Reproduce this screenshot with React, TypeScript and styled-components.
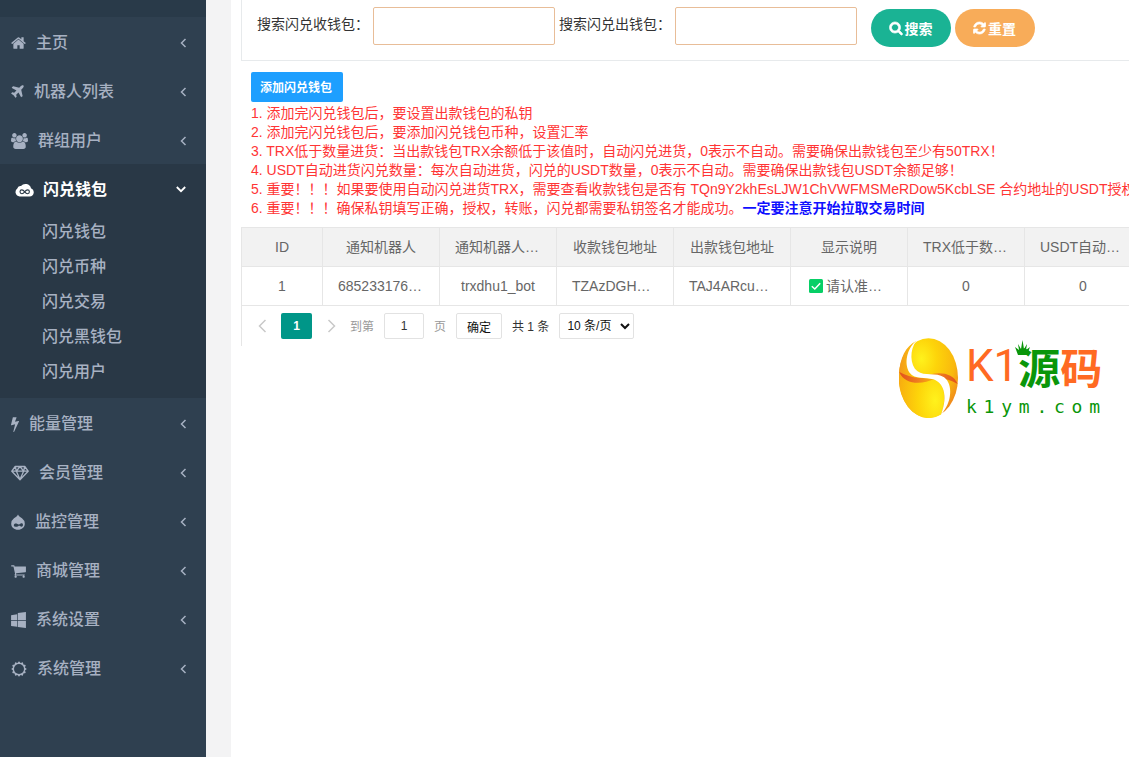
import React from "react";
import styled, { createGlobalStyle } from "styled-components";

const sans = `"Liberation Sans", "Noto Sans CJK SC", sans-serif`;

const GlobalStyle = createGlobalStyle`
  *, *::before, *::after { box-sizing: border-box; }
  body { margin: 0; background: #fff; font-family: ${sans}; font-size: 14px; color: #333; }
  button, input, select { font-family: inherit; }
`;

const Page = styled.div`
  position: relative;
  display: flex;
  min-height: 100vh;
  overflow: hidden;
`;

const Sidebar = styled.nav`
  flex: none;
  width: 206px;
  padding-top: 17px;
  background: #2f4050;
  box-shadow: inset 0 17px 0 #293a49;
`;

const MenuGroup = styled.div<{ $open?: boolean }>`
  padding-bottom: ${(p) => (p.$open ? 10 : 0)}px;
  background: ${(p) => (p.$open ? "#293846" : "transparent")};
`;

const MenuLink = styled.a<{ $open?: boolean }>`
  display: flex;
  align-items: center;
  gap: ${(p) => (p.$open ? 9 : 10)}px;
  height: 49px;
  padding: 2px 19px 0 ${(p) => (p.$open ? 15 : 11)}px;
  font-size: 16px;
  font-weight: ${(p) => (p.$open ? 700 : 500)};
  color: ${(p) => (p.$open ? "#fff" : "#a7b1c2")};
  text-decoration: none;
  white-space: nowrap;
`;

const MenuText = styled.span`
  flex: 1;
  padding-bottom: 4px;
`;

const SubLink = styled.a`
  display: flex;
  align-items: center;
  height: 35px;
  padding: 0 0 2px 42px;
  font-size: 16px;
  font-weight: 500;
  color: #a7b1c2;
  text-decoration: none;
`;

const Gutter = styled.div`
  flex: none;
  width: 25px;
  background: #f3f3f4;
`;

const Content = styled.main`
  flex: 1;
  min-width: 0;
  padding-left: 10px;
`;

const SearchBar = styled.form`
  display: flex;
  align-items: flex-start;
  height: 61px;
  padding: 7px 0 0 15px;
  border-left: 1px solid #e7eaec;
  border-bottom: 1px solid #e7eaec;
`;

const Label = styled.label`
  flex: none;
  width: 116px;
  line-height: 34px;
  white-space: nowrap;
`;

const SearchInput = styled.input`
  flex: none;
  width: 182px;
  height: 38px;
  margin-right: 4px;
  padding: 0 8px;
  border: 1px solid #e8bd98;
  border-radius: 2px;
  background: #fff;
  font-size: 14px;
`;

const PillButton = styled.button<{ $color: string }>`
  display: flex;
  flex: none;
  align-items: center;
  justify-content: center;
  gap: 2px;
  width: 80px;
  height: 38px;
  margin: 2px 4px 0 0;
  padding: 0 1px 1px 0;
  border: 0;
  border-radius: 19px;
  background: ${(p) => p.$color};
  color: #fff;
  font-size: 14px;
  font-weight: 600;
  &:first-of-type { margin-left: 10px; }
`;

const Intro = styled.section`
  padding: 11px 0 0 10px;
`;

const AddButton = styled.button`
  display: block;
  height: 30px;
  padding: 0 11px 2px 9px;
  border: 0;
  border-radius: 2px;
  background: #1e9fff;
  color: #fff;
  font-size: 12px;
  font-weight: 600;
`;

const Notes = styled.div`
  padding: 2px 0 9px;
  color: #ff3535;
  line-height: 19px;
  white-space: nowrap;
`;

const Note = styled.p`
  height: 19px;
  margin: 0;
`;

const Strong = styled.b`
  color: #1010ff;
`;

const TableArea = styled.section`
  height: 119px;
  border-left: 1px solid #e6e6e6;
`;

const Table = styled.table`
  width: 1017px;
  table-layout: fixed;
  border-collapse: separate;
  border-spacing: 0;
  border-top: 1px solid #e6e6e6;
  color: #666;
`;

const Cell = styled.td<{ $narrow?: boolean; $clipped?: boolean }>`
  width: ${(p) => (p.$narrow ? 81 : 117)}px;
  height: 39px;
  padding: 0 ${(p) => (p.$clipped ? 0 : 14)}px 0 ${(p) => (p.$clipped ? 15 : 14)}px;
  border-right: 1px solid #e6e6e6;
  border-bottom: 1px solid #e6e6e6;
  overflow: hidden;
  text-align: ${(p) => (p.$clipped ? "left" : "center")};
  font-weight: 400;
  line-height: 28px;
  white-space: nowrap;
`;

const HeadCell = styled(Cell)`
  background: #f2f2f2;
`;

const CheckedText = styled.span`
  display: flex;
  align-items: center;
  gap: 3px;
  padding-left: 3px;
`;

const Pager = styled.div`
  display: flex;
  align-items: center;
  gap: 10px;
  height: 40px;
  padding-left: 11px;
  font-size: 12px;
  white-space: nowrap;
`;

const PagerArrow = styled.button`
  display: flex;
  align-items: center;
  justify-content: center;
  width: 18px;
  height: 26px;
  padding: 0;
  border: 0;
  background: none;
  color: #c9c9c9;
`;

const CurrentPage = styled.button`
  width: 31px;
  height: 26px;
  padding: 0;
  border: 0;
  border-radius: 2px;
  background: #009688;
  color: #fff;
  font-size: 12px;
  font-weight: 700;
`;

const PagerText = styled.span`
  padding-bottom: 2px;
`;

const Muted = styled.label`
  padding-bottom: 2px;
  color: #999;
`;

const PageInput = styled.input`
  width: 40px;
  height: 26px;
  padding: 0;
  border: 1px solid #e2e2e2;
  border-radius: 2px;
  color: #333;
  text-align: center;
  font-size: 12px;
`;

const ConfirmButton = styled.button`
  width: 46px;
  height: 26px;
  padding: 0;
  border: 1px solid #e2e2e2;
  border-radius: 2px;
  background: #fff;
  color: #111;
  font-size: 12px;
`;

const PageSize = styled.select`
  width: 75px;
  height: 26px;
  padding: 0 0 0 3px;
  border: 1px solid #e2e2e2;
  border-radius: 2px;
  background: #fff;
  color: #111;
  font-size: 12px;
`;

const Watermark = styled.div`
  position: absolute;
  top: 337px;
  right: 29px;
  display: flex;
  align-items: center;
  gap: 8px;
  pointer-events: none;
`;

const Brand = styled.div`
  width: 134px;
`;

const BrandName = styled.div`
  display: flex;
  align-items: center;
  justify-content: space-between;
  height: 58px;
  line-height: 58px;
  color: #ff6a22;
  white-space: nowrap;
`;

const Latin = styled.span`
  font-family: "Liberation Sans Narrow", "Roboto", sans-serif;
  font-size: 44px;
  font-weight: 400;
`;

const Han = styled.span`
  position: relative;
  font-family: "Noto Sans CJK SC", sans-serif;
  font-size: 42px;
  font-weight: 700;
`;

const Green = styled.span`
  color: #0a960a;
`;

const Crown = styled.svg`
  position: absolute;
  top: 3px;
  left: -3px;
`;

const BrandSite = styled.div`
  display: flex;
  justify-content: space-between;
  height: 24px;
  line-height: 24px;
  font-family: "DejaVu Sans Mono", monospace;
  font-size: 18px;
  color: #0a960a;
`;

type GlyphProps = { d: string; x?: number; units: number; width: number; height?: number; bold?: boolean };

const Glyph = ({ d, x = 0, units, width, height = 16, bold }: GlyphProps) => (
  <svg
    width={width}
    height={height}
    viewBox={`${x} 0 ${units} 1792`}
    fill="currentColor"
    stroke="currentColor"
    strokeWidth={bold ? 90 : 0}
    overflow="visible"
    aria-hidden="true"
  >
    <path d={d} />
  </svg>
);

const HOME =
  "M1472 992v480q0 26-19 45t-45 19h-384v-384h-256v384h-384q-26 0-45-19t-19-45v-480q0-1 .5-3t.5-3l575-474 575 474q1 2 1 6zm223-69l-62 74q-8 9-21 11h-3q-13 0-21-7l-692-577-692 577q-12 8-24 7-13-2-21-11l-62-74q-8-10-7-23.5t11-21.5l719-599q32-26 76-26t76 26l244 204v-195q0-14 9-23t23-9h192q14 0 23 9t9 23v408l219 182q10 8 11 21.5t-7 23.5z";
const PLANE =
  "M1568 160q44 52 12 148t-108 172l-161 161 160 696q5 19-12 33l-128 96q-7 6-19 6-4 0-7-1-15-3-21-16l-279-508-259 259 53 194q5 17-8 31l-96 96q-9 9-23 9h-2q-15-2-24-13l-189-252-252-189q-11-7-13-23-1-13 9-25l96-97q9-9 23-9 6 0 8 1l194 53 259-259-508-279q-14-8-17-24-2-16 9-27l128-128q14-13 30-8l665 159 160-160q76-76 172-108t148 12z";
const USERS =
  "M593 896q-162 5-265 128h-134q-82 0-138-40.5t-56-118.5q0-353 124-353 6 0 43.5 21t97.5 42.5 119 21.5q67 0 133-23-5 37-5 66 0 139 81 256zm1071 637q0 120-73 189.5t-194 69.5h-874q-121 0-194-69.5t-73-189.5q0-53 3.5-103.5t14-109 26.5-108.5 43-97.5 62-81 85.5-53.5 111.5-20q10 0 43 21.5t73 48 107 48 135 21.5 135-21.5 107-48 73-48 43-21.5q61 0 111.5 20t85.5 53.5 62 81 43 97.5 26.5 108.5 14 109 3.5 103.5zm-1024-1277q0 106-75 181t-181 75-181-75-75-181 75-181 181-75 181 75 75 181zm704 384q0 159-112.5 271.5t-271.5 112.5-271.5-112.5-112.5-271.5 112.5-271.5 271.5-112.5 271.5 112.5 112.5 271.5zm576 225q0 78-56 118.5t-138 40.5h-134q-103-123-265-128 81-117 81-256 0-29-5-66 66 23 133 23 59 0 119-21.5t97.5-42.5 43.5-21q124 0 124 353zm-128-609q0 106-75 181t-181 75-181-75-75-181 75-181 181-75 181 75 75 181z";
const BOLT =
  "M1333 566q18 20 7 44l-540 1157q-13 25-42 25-4 0-14-2-17-5-25.5-19t-4.5-30l197-808-406 101q-4 1-12 1-18 0-31-11-18-15-13-39l201-825q4-14 16-23t28-9h328q19 0 32 12.5t13 29.5q0 8-5 18l-171 463 396-98q8-2 12-2 19 0 34 15z";
const CART =
  "M704 1536q0 52-38 90t-90 38-90-38-38-90 38-90 90-38 90 38 38 90zm896 0q0 52-38 90t-90 38-90-38-38-90 38-90 90-38 90 38 38 90zm128-1088v512q0 24-16.5 42.5t-40.5 21.5l-1044 122q13 60 13 70 0 16-24 64h920q26 0 45 19t19 45-19 45-45 19h-1024q-26 0-45-19t-19-45q0-11 8-31.5t16-36 21.5-40 15.5-29.5l-177-823h-204q-26 0-45-19t-19-45 19-45 45-19h256q16 0 28.5 6.5t19.5 15.5 13 24.5 8 26 5.5 29.5 4.5 26h1201q26 0 45 19t19 45z";
const WINDOWS =
  "M746 1006v651l-682-94v-557h682zm0-743v659h-682v-565zm982 743v786l-907-125v-661h907zm0-1006v922h-907v-797z";
const SEARCH =
  "M1216 832q0-185-131.5-316.5t-316.5-131.5-316.5 131.5-131.5 316.5 131.5 316.5 316.5 131.5 316.5-131.5 131.5-316.5zm512 832q0 52-38 90t-90 38q-54 0-90-38l-343-342q-179 124-399 124-143 0-273.5-55.5t-225-150-150-225-55.5-273.5 55.5-273.5 150-225 225-150 273.5-55.5 273.5 55.5 225 150 150 225 55.5 273.5q0 220-124 399l343 343q37 37 37 90z";
const REFRESH =
  "M1639 1056q0 5-1 7-64 268-268 434.5t-478 166.5q-146 0-282.5-55t-243.5-157l-129 129q-19 19-45 19t-45-19-19-45v-448q0-26 19-45t45-19h448q26 0 45 19t19 45-19 45l-137 137q71 66 161 102t187 36q134 0 250-65t186-179q11-17 53-117 8-23 30-23h192q13 0 22.5 9.5t9.5 22.5zm25-800v448q0 26-19 45t-45 19h-448q-26 0-45-19t-19-45 19-45l138-138q-148-137-349-137-134 0-250 65t-186 179q-11 17-53 117-8 23-30 23h-199q-13 0-22.5-9.5t-9.5-22.5v-7q65-268 270-434.5t480-166.5q146 0 284 55.5t245 156.5l130-129q19-19 45-19t45 19 19 45z";

const DiamondIcon = () => (
  <svg width="18" height="16" viewBox="0 0 18 16" fill="none" stroke="currentColor" strokeWidth="1.3" strokeLinejoin="round" aria-hidden="true">
    <path d="M4.2 1.5h9.6l3.4 4.7L9 14.8.8 6.2zM.8 6.2h16.4M5.4 6.2L9 14.5l3.6-8.3M4.2 1.5l1.2 4.7L9 1.5l3.6 4.7 1.2-4.7" />
  </svg>
);

const DropIcon = () => (
  <svg width="14" height="16" viewBox="0 0 14 16" aria-hidden="true">
    <path d="M7 .5c.8 2 2.600 2.600 4 3.700a6.900 6.900 0 0 1 2.800 5.500c0 3.500-3 6-6.800 6S.2 13.200.2 9.700A6.900 6.900 0 0 1 3 4.200C4.500 3.100 6.200 2.500 7 .5z" fill="currentColor" />
    <path d="M4.600 12.800c-1.500 0-2-1-1.700-2 .4-1.200 1.900-1.600 3.100-1 1 .5 1.500 1 2.200.7.900-.5 1.600-1.300 2.600-1.200 1.200.2 1.500 1.700.9 2.800-.7 1-1.700.7-2.400.2-.8-.5-1.300-.6-2.100-.1-.8.400-1.500.6-2.600.6z" fill="#2f4050" />
  </svg>
);

const CloudIcon = () => (
  <svg width="19" height="14" viewBox="0 0 19 14" aria-hidden="true">
    <path d="M4.6 13.5A4.4 4.4 0 0 1 2.3 5.6 3.2 3.2 0 0 1 6 3.1 5.7 5.7 0 0 1 16 5.2a4.3 4.3 0 0 1-1.4 8.3z" fill="#fff" />
    <path d="M9.7 8.8C8.6 7.4 7.8 6.9 6.9 6.9a1.9 1.9 0 0 0 0 3.8c.9 0 1.7-.5 2.8-1.900s1.9-1.900 2.8-1.900a1.9 1.9 0 0 1 0 3.8c-.9 0-1.700-.5-2.800-1.900z" fill="none" stroke="#293846" strokeWidth="1.1" />
  </svg>
);

const teeth = Array.from({ length: 24 }, (_, i) => {
  const r = i % 2 ? 6.2 : 7.8;
  const a = (i * Math.PI) / 12;
  return `${(8 + r * Math.sin(a)).toFixed(2)},${(8 - r * Math.cos(a)).toFixed(2)}`;
}).join(" ");

const SunIcon = () => (
  <svg width="16" height="16" viewBox="0 0 16 16" aria-hidden="true">
    <polygon points={teeth} fill="currentColor" />
    <circle cx="8" cy="8" r="5" fill="#2f4050" />
  </svg>
);

const AngleLeft = () => (
  <svg width="7" height="10" viewBox="0 0 7 10" fill="none" stroke="currentColor" strokeWidth="1.5" aria-hidden="true">
    <path d="M5.5 1L1.5 5l4 4" />
  </svg>
);

const AngleDown = () => (
  <svg width="11" height="7" viewBox="0 0 11 7" fill="none" stroke="currentColor" strokeWidth="1.8" aria-hidden="true">
    <path d="M.8 1L5 5.2 9.2 1" />
  </svg>
);

const PageChevron = ({ next }: { next?: boolean }) => (
  <svg width="9" height="14" viewBox="0 0 9 14" fill="none" stroke="currentColor" strokeWidth="1.5" aria-hidden="true">
    <path d={next ? "M1.5 1l6 6-6 6" : "M7.5 1l-6 6 6 6"} />
  </svg>
);

const CheckMark = () => (
  <svg width="14" height="14" viewBox="0 0 14 14" role="img" aria-label="✅">
    <rect width="14" height="14" rx="1.5" fill="#07cf66" />
    <path d="M2.8 7.2l3 2.8 5.4-5.8" fill="none" stroke="#fff" strokeWidth="1.5" />
  </svg>
);

const SwirlBand = () => <path d="M1 102C20 113 40 118 60 119L106 123C70 141 16 141 1 102z" fill="url(#band)" />;

const Swirl = () => (
  <svg width="59" height="80" viewBox="0 0 178 240" aria-hidden="true">
    <defs>
      <radialGradient id="upper" cx="0.38" cy="0.26" r="0.75">
        <stop offset="0" stopColor="#fff21c" />
        <stop offset="0.35" stopColor="#fdd40a" />
        <stop offset="0.75" stopColor="#f9b80e" />
        <stop offset="1" stopColor="#f08a1c" />
      </radialGradient>
      <radialGradient id="lower" cx="0.8" cy="0.77" r="0.95">
        <stop offset="0" stopColor="#fff21c" />
        <stop offset="0.4" stopColor="#fdd40a" />
        <stop offset="0.8" stopColor="#f9b30e" />
        <stop offset="1" stopColor="#f39a1c" />
      </radialGradient>
      <linearGradient id="band">
        <stop offset="0" stopColor="#e2501c" />
        <stop offset="0.5" stopColor="#ee7a20" />
        <stop offset="1" stopColor="#f9b30e" />
      </linearGradient>
      <linearGradient id="rim" x1="0" y1="0" x2="1" y2="0">
        <stop offset="0" stopColor="#f39a1c" />
        <stop offset="1" stopColor="#fdc80a" />
      </linearGradient>
    </defs>
    <ellipse cx="89" cy="120" rx="89" ry="120" fill="url(#upper)" />
    <path d="M52 8C24 30 14 76 32 104 48 126 80 116 104 122 132 130 148 170 127 230A89 120 0 0 1 52 8z" fill="url(#lower)" />
    <path d="M52 8C24 30 14 76 32 104L40 118 1 106C2 60 20 24 52 8z" fill="url(#rim)" />
    <SwirlBand />
    <g transform="rotate(180 89 120)">
      <SwirlBand />
    </g>
    <path d="M52 8C24 30 14 76 32 104 48 126 80 116 104 124 132 134 150 170 127 230 160 196 164 138 136 118 112 102 76 116 56 100 32 80 32 34 52 8z" fill="#fff" />
  </svg>
);

const before = [
  { text: "主页", icon: <Glyph d={HOME} x={64} units={1664} width={15} /> },
  { text: "机器人列表", icon: <Glyph d={PLANE} x={192} units={1408} width={13} /> },
  { text: "群组用户", icon: <Glyph d={USERS} units={1920} width={17} /> },
];

const after = [
  { text: "能量管理", icon: <Glyph d={BOLT} x={448} units={896} width={8} /> },
  { text: "会员管理", icon: <DiamondIcon /> },
  { text: "监控管理", icon: <DropIcon /> },
  { text: "商城管理", icon: <Glyph d={CART} x={64} units={1664} width={15} /> },
  { text: "系统设置", icon: <Glyph d={WINDOWS} x={64} units={1664} width={15} /> },
  { text: "系统管理", icon: <SunIcon /> },
];

const subItems = ["闪兑钱包", "闪兑币种", "闪兑交易", "闪兑黑钱包", "闪兑用户"];

const notes = [
  "1. 添加完闪兑钱包后，要设置出款钱包的私钥",
  "2. 添加完闪兑钱包后，要添加闪兑钱包币种，设置汇率",
  "3. TRX低于数量进货：当出款钱包TRX余额低于该值时，自动闪兑进货，0表示不自动。需要确保出款钱包至少有50TRX！",
  "4. USDT自动进货闪兑数量：每次自动进货，闪兑的USDT数量，0表示不自动。需要确保出款钱包USDT余额足够！",
  "5. 重要！！！如果要使用自动闪兑进货TRX，需要查看收款钱包是否有 TQn9Y2khEsLJW1ChVWFMSMeRDow5KcbLSE 合约地址的USDT授权",
];

const columns = ["ID", "通知机器人", "通知机器人…", "收款钱包地址", "出款钱包地址", "显示说明", "TRX低于数…", "USDT自动…"];

const row = ["1", "685233176…", "trxdhu1_bot", "TZAzDGH…", "TAJ4ARcu…", "请认准…", "0", "0"];

const isClipped = (text: string) => text.endsWith("…");

const MenuItem = ({ text, icon }: { text: string; icon: React.ReactNode }) => (
  <MenuGroup>
    <MenuLink href="#">
      {icon}
      <MenuText>{text}</MenuText>
      <AngleLeft />
    </MenuLink>
  </MenuGroup>
);

export default function App() {
  return (
    <>
      <GlobalStyle />
      <Page>
        <Sidebar>
          {before.map((item) => <MenuItem key={item.text} {...item} />)}
          <MenuGroup $open>
            <MenuLink href="#" $open>
              <CloudIcon />
              <MenuText>闪兑钱包</MenuText>
              <AngleDown />
            </MenuLink>
            {subItems.map((text) => <SubLink key={text} href="#">{text}</SubLink>)}
          </MenuGroup>
          {after.map((item) => <MenuItem key={item.text} {...item} />)}
        </Sidebar>
        <Gutter />
        <Content>
          <SearchBar onSubmit={(e) => e.preventDefault()}>
            <Label htmlFor="receive">搜索闪兑收钱包：</Label>
            <SearchInput id="receive" />
            <Label htmlFor="send">搜索闪兑出钱包：</Label>
            <SearchInput id="send" />
            <PillButton type="submit" $color="#1ab394">
              <Glyph d={SEARCH} x={64} units={1664} width={14} height={14} bold />搜索
            </PillButton>
            <PillButton type="reset" $color="#f8ac59">
              <Glyph d={REFRESH} x={128} units={1536} width={13} height={14} bold />重置
            </PillButton>
          </SearchBar>
          <Intro>
            <AddButton type="button">添加闪兑钱包</AddButton>
            <Notes>
              {notes.map((text) => <Note key={text}>{text}</Note>)}
              <Note>
                6. 重要！！！确保私钥填写正确，授权，转账，闪兑都需要私钥签名才能成功。<Strong>一定要注意开始拉取交易时间</Strong>
              </Note>
            </Notes>
          </Intro>
          <TableArea>
            <Table>
              <thead>
                <tr>
                  {columns.map((text, i) => (
                    <HeadCell as="th" key={text} scope="col" $narrow={i === 0} $clipped={isClipped(text)}>
                      {text}
                    </HeadCell>
                  ))}
                  <HeadCell />
                </tr>
              </thead>
              <tbody>
                <tr>
                  {row.map((text, i) => (
                    <Cell key={i} $narrow={i === 0} $clipped={isClipped(text)}>
                      {i === 5 ? <CheckedText><CheckMark />{text}</CheckedText> : text}
                    </Cell>
                  ))}
                  <Cell />
                </tr>
              </tbody>
            </Table>
            <Pager>
              <PagerArrow type="button" aria-label="上一页"><PageChevron /></PagerArrow>
              <CurrentPage type="button">1</CurrentPage>
              <PagerArrow type="button" aria-label="下一页"><PageChevron next /></PagerArrow>
              <Muted htmlFor="page">到第</Muted>
              <PageInput id="page" defaultValue="1" />
              <Muted htmlFor="page">页</Muted>
              <ConfirmButton type="button">确定</ConfirmButton>
              <PagerText>共 1 条</PagerText>
              <PageSize aria-label="每页条数">
                <option>10 条/页</option>
              </PageSize>
            </Pager>
          </TableArea>
        </Content>
        <Watermark>
          <Swirl />
          <Brand>
            <BrandName>
              <Latin>K1</Latin>
              <Han>
                <Crown width="15" height="16" viewBox="0 0 15 16" fill="#0a960a" aria-hidden="true">
                  <path d="M3 15L0 7l4 3-1-6 3 5 1.5-9L9 9l3-5-1 6 4-3-3 8z" />
                </Crown>
                <Green>源</Green>码
              </Han>
            </BrandName>
            <BrandSite>
              {Array.from("k1ym.com").map((char, i) => <span key={i}>{char}</span>)}
            </BrandSite>
          </Brand>
        </Watermark>
      </Page>
    </>
  );
}
